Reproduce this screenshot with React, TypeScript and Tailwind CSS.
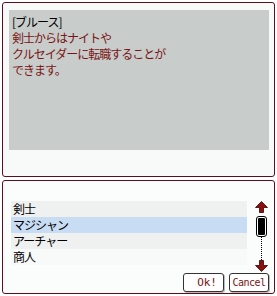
import React from 'react';

const ITEMS = ['剣士', 'マジシャン', 'アーチャー', '商人'];

const jp = { fontFamily: '"MS Gothic", "Noto Sans CJK JP", sans-serif' };

const Arrow: React.FC<{ down?: boolean }> = ({ down }) => (
  <svg width="13" height="12" viewBox="0 0 13 12" className={down ? 'rotate-180' : ''}>
    <path d="M6.5 0.5 L12.5 6.5 L8.5 6.5 L8.5 11.5 L4.5 11.5 L4.5 6.5 L0.5 6.5 Z" fill="#8a1010" stroke="#3a0000" strokeWidth="0.8" />
  </svg>
);

const App: React.FC = () => {
  return (
    <div className="w-[277px] h-[296px] bg-white px-[2px] pt-[2px] text-[12px] leading-[16px] tracking-[-1px]" style={jp}>
      {/* message panel */}
      <div className="h-[175px] border border-[#5a0f1e] rounded-[3px] bg-[#f8fafa] pl-[6px] pr-[5px] pt-[7px]">
        <div className="h-[140px] bg-[#c8ccca] px-[3px] pt-[4px]">
          <div className="text-black">[ブルース]</div>
          <div className="text-[#7a1414]">剣士からはナイトや</div>
          <div className="text-[#7a1414]">クルセイダーに転職することが</div>
          <div className="text-[#7a1414]">できます。</div>
        </div>
      </div>

      {/* select panel */}
      <div className="mt-[3px] h-[114px] border border-[#5a0f1e] rounded-[3px] bg-[#fbfcfc] pl-[8px] pr-[5px] pt-[20px] flex flex-col">
        <div className="flex">
          <div className="w-[237px] flex flex-col">
            {ITEMS.map((it, i) => (
              <div
                key={it}
                className={`h-[16px] pl-[2px] text-black ${i === 1 ? 'bg-[#c8dcf4]' : i % 2 === 0 ? 'bg-[#eff1f0]' : 'bg-[#f8f9f9]'}`}
              >
                {it}
              </div>
            ))}
          </div>
          <div className="ml-[7px] w-[15px] flex flex-col items-center">
            <Arrow />
            <div className="mt-[4px] w-[9px] h-[19px] bg-black border border-white outline outline-1 outline-black rounded-[2px]" />
            <div className="h-[24px] border-l border-dotted border-black" />
            <Arrow down />
          </div>
        </div>
        <div className="mt-auto mb-[1px] flex justify-end gap-[5px] tracking-normal" style={{ fontFamily: '"DejaVu Sans Mono", monospace' }}>
          <button className="w-[41px] h-[19px] border border-[#333] rounded-[3px] bg-white text-[#7a1414] text-[11px] leading-[17px] text-right pr-[6px] shadow-[1px_1px_0_#bbb]">
            Ok!
          </button>
          <button className="w-[40px] h-[19px] border border-[#333] rounded-[3px] bg-white text-[#7a1414] text-[10px] leading-[17px] tracking-[-0.5px] shadow-[1px_1px_0_#bbb]">
            Cancel
          </button>
        </div>
      </div>
    </div>
  );
};

export default App;
